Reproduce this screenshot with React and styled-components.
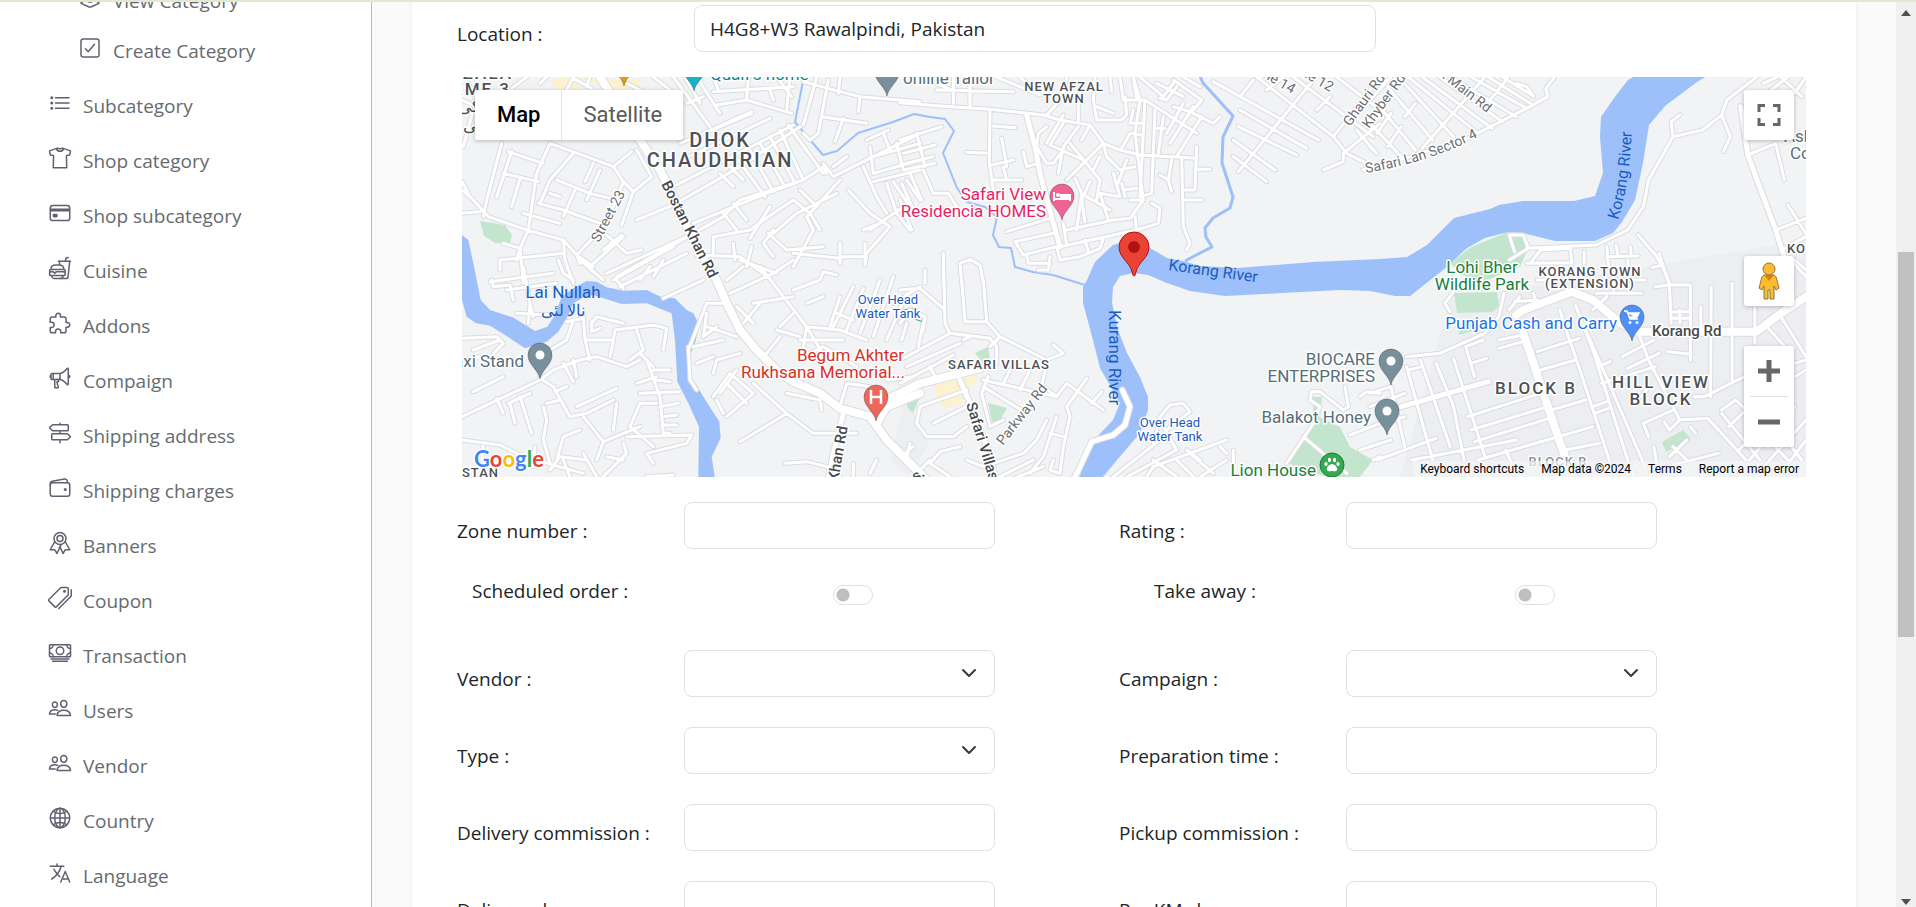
import React from "react";
import styled, { createGlobalStyle } from "styled-components";
import {
  IoLayersOutline,
  IoCheckboxOutline,
  IoListOutline,
  IoShirtOutline,
  IoCardOutline,
  IoFastFoodOutline,
  IoExtensionPuzzleOutline,
  IoMegaphoneOutline,
  IoTrailSignOutline,
  IoWalletOutline,
  IoRibbonOutline,
  IoPricetagsOutline,
  IoCashOutline,
  IoPeopleOutline,
  IoGlobeOutline,
  IoLanguageOutline,
} from "react-icons/io5";

const GlobalStyle = createGlobalStyle`
  *, *::before, *::after { box-sizing: border-box; }
  body {
    margin: 0;
    background: #fafafa;
    color: #212529;
    font-family: "Open Sans", "Noto Sans", sans-serif;
    font-size: 19px;
    line-height: 30px;
  }
`;

const Shell = styled.div`
  display: flex;
  height: 100vh;
  overflow: hidden;
  border-top: 2px solid #e3e8d0;
`;

/* ---------- sidebar ---------- */

const Sidebar = styled.nav`
  flex: 0 0 372px;
  overflow: hidden;
  background: #fff;
  border-right: 1px solid #bcbcbc;
`;

const Menu = styled.ul`
  list-style: none;
  margin: 0;
  padding: 0;
`;

const SubMenu = styled(Menu)`
  margin: -26px 0 2px;
`;

const MenuLink = styled.a`
  display: flex;
  align-items: center;
  gap: 11px;
  height: ${(p) => (p.$nested ? 50 : 55)}px;
  padding-left: ${(p) => (p.$nested ? 78 : 48)}px;
  color: #666b70;
  text-decoration: none;

  svg {
    flex: none;
    margin-bottom: 6px;
    color: #625f70;
  }
`;

const categoryMenu = [
  { label: "View Category", icon: IoLayersOutline },
  { label: "Create Category", icon: IoCheckboxOutline },
];

const menu = [
  { label: "Subcategory", icon: IoListOutline },
  { label: "Shop category", icon: IoShirtOutline },
  { label: "Shop subcategory", icon: IoCardOutline },
  { label: "Cuisine", icon: IoFastFoodOutline },
  { label: "Addons", icon: IoExtensionPuzzleOutline },
  { label: "Compaign", icon: IoMegaphoneOutline },
  { label: "Shipping address", icon: IoTrailSignOutline },
  { label: "Shipping charges", icon: IoWalletOutline },
  { label: "Banners", icon: IoRibbonOutline },
  { label: "Coupon", icon: IoPricetagsOutline },
  { label: "Transaction", icon: IoCashOutline },
  { label: "Users", icon: IoPeopleOutline },
  { label: "Vendor", icon: IoPeopleOutline },
  { label: "Country", icon: IoGlobeOutline },
  { label: "Language", icon: IoLanguageOutline },
];

function MenuItem({ label, icon: Icon, nested }) {
  return (
    <li>
      <MenuLink href="#" $nested={nested}>
        <Icon size={24} />
        {label}
      </MenuLink>
    </li>
  );
}

/* ---------- form ---------- */

const Main = styled.main`
  flex: 1;
  min-width: 0;
  padding: 0 40px;
`;

const Card = styled.form`
  padding-top: 3px;
  min-height: 100%;
  background: #fff;
  box-shadow: 0 0 6px rgba(0, 0, 0, 0.06);
`;

const LocationRow = styled.div`
  display: flex;
  padding-left: 45px;
`;

const Label = styled.label`
  flex: 0 0 ${(p) => p.$width || 227}px;
  padding-top: 14px;
`;

const TextInput = styled.input`
  display: block;
  width: 100%;
  height: 47px;
  padding: 0 15px;
  border: 1px solid #dee0e6;
  border-radius: 8px;
  background: #fff;
  color: #212529;
  font: inherit;
`;

const LocationInput = styled(TextInput)`
  width: 682px;
`;

const Fields = styled.div`
  display: grid;
  grid-template-columns: 1fr 1fr;
  row-gap: 30px;
  padding: 0 75px 0 45px;
`;

const Field = styled.div`
  display: flex;
  padding-right: 124px;
`;

const Control = styled.div`
  position: relative;
  flex: 1;
  min-width: 0;
`;

const Select = styled(TextInput).attrs({ as: "select" })`
  appearance: none;
`;

const Chevron = styled.svg`
  position: absolute;
  top: 15px;
  right: 18px;
  pointer-events: none;
`;

const Switches = styled.div`
  display: grid;
  grid-template-columns: 1fr 1fr;
  padding: 27px 20px 44px 60px;
`;

const SwitchField = styled.div`
  display: flex;
  align-items: center;
`;

const SwitchLabel = styled.label`
  flex: 0 0 361px;
`;

const Switch = styled.input`
  appearance: none;
  width: 40px;
  height: 20px;
  margin: 8px 0 0;
  border: 1px solid #dedfe3;
  border-radius: 10px;
  background: radial-gradient(circle at 9px 9px, #bfbfbf 6px, transparent 7px) #fff;
`;

/* ---------- map ---------- */

const MapFrame = styled.section`
  position: relative;
  height: 400px;
  margin: 25px 50px;
  overflow: hidden;
  background: #f1f3f4;
  font-family: Roboto, sans-serif;
`;

const MapCanvas = styled.svg`
  display: block;
  width: 100%;
  height: 100%;
`;

const shadow = "0 1px 4px rgba(0, 0, 0, 0.25)";

const TypeSwitch = styled.div`
  position: absolute;
  top: 13px;
  left: 13px;
  display: flex;
  height: 50px;
  border-radius: 3px;
  background: #fff;
  box-shadow: ${shadow};
`;

const TypeButton = styled.button`
  padding: 0 21px 2px;
  border: 0;
  border-left: 1px solid ${(p) => (p.$active ? "transparent" : "#e4e4e4")};
  background: none;
  color: ${(p) => (p.$active ? "#000" : "#5a5a5a")};
  font: ${(p) => (p.$active ? 500 : 400)} 22px Roboto, sans-serif;
`;

const MapControls = styled.div`
  position: absolute;
  top: 13px;
  right: 12px;
  display: flex;
  flex-direction: column;
  width: 50px;
`;

const MapButton = styled.button`
  display: grid;
  place-items: center;
  width: 50px;
  height: 50px;
  padding: 0;
  border: 0;
  border-radius: 3px;
  background: #fff;
  box-shadow: ${shadow};
`;

const PegmanButton = styled(MapButton)`
  margin: 116px 0 40px;
`;

const ZoomGroup = styled.div`
  border-radius: 3px;
  background: #fff;
  box-shadow: ${shadow};

  hr {
    margin: 0 6px;
    border: 0;
    border-top: 1px solid #e0e0e0;
  }

  button {
    box-shadow: none;
  }
`;

const Attribution = styled.div`
  position: absolute;
  right: 0;
  bottom: 0;
  display: flex;
  align-items: center;
  gap: 17px;
  height: 16px;
  padding: 0 7px;
  background: rgba(245, 245, 245, 0.7);
  color: #000;
  font-size: 12px;
  line-height: 16px;

  a, button {
    padding: 0;
    border: 0;
    background: none;
    color: inherit;
    font: inherit;
    text-decoration: none;
  }
`;

/* Road geometry, one sheet per map tile; each sheet has its own origin and scale. */
const sheets = [
  {
    at: "translate(440 0) scale(.33333)",
    minor: `M66,570L100,600 145,650 260,690 370,720 410,765 420,790M66,640L120,635M66,545L90,590M185,430L140,600 130,650M215,455L170,590
      M330,430L290,520 265,690 240,745 250,850M205,455L310,490M190,520L295,545M240,535L215,620M250,640L360,670M330,430L440,470 520,500 575,455
      M400,460L330,540 300,610M460,490L435,545M350,540L450,580 530,600M295,610L370,630 480,670M405,570L370,650M520,500L550,545 500,670 410,765
      M550,545L580,575 545,675M580,575L635,530 590,450M480,510L440,600M330,580L360,590M190,730L240,745 230,780M370,720L375,780 400,850
      M180,810L180,780 370,760M500,705L560,760 605,750M545,705L490,750M410,765L460,800M450,800L550,710
      M590,660L700,615 900,500 1080,380M700,560L1060,375M760,670L980,580 1090,540 1150,500M530,830L850,650M500,820L740,710M725,480L990,355M720,430L935,340
      M870,500L910,540M895,480L975,590M930,450L1000,575M960,430L1035,560M990,410L1060,540M1020,390L1090,540M1045,375L1150,520M840,520L880,560
      M1150,490L1180,530 1300,470 1440,430M1180,500L1220,470M1150,500L1160,520M1090,400L1110,420 1135,400 1165,240M1130,231L1090,375
      M1145,350L1280,370M1210,355L1185,425M1090,245L1200,275 1260,290 1440,305M1260,290L1255,335M1200,231L1195,280
      M820,275L1060,260M830,315L920,300 1055,340M925,231L920,300M1050,231L1040,330M1010,231L1055,290M990,270L1000,300
      M700,231L810,380M735,231L780,310M770,231L840,340M740,310L790,290M790,400L935,335M820,231L835,270M380,270L400,231M400,235L455,265M450,231L440,260
      M300,250L320,231M560,250L640,290M215,265L260,231M140,265L150,231M90,231L110,270M640,231L690,270
      M850,650L900,600 1090,540M880,610L920,660M850,640L890,690M1190,580L1070,640 1000,700M1225,570L1290,640 1350,680 1280,760 1275,795
      M1000,640L1060,600 1110,640 1140,690M930,715L990,620M985,700L1040,750 1150,740M1200,540L1100,650 1120,690 1060,800M1270,690L1320,670
      M820,765L820,710 930,690 1000,640M880,730L885,780M935,740L920,800M770,765L900,770 990,835M1060,760L1200,775 1200,790M1200,770L1280,770
      M1000,690L970,730 1000,770M1080,570L1130,620M1290,690L1390,620
      M1260,490L1440,400M1270,500L1310,590 1340,640M1290,440L1300,520 1440,480M1280,420L1345,390M1330,400L1350,450M1370,430L1390,510M1300,545L1440,510
      M1340,550L1370,640 1410,690M1360,545L1410,620M1400,540L1440,600M66,300L150,340M100,330L70,440`,
  },
  {
    at: "translate(900 0) scale(.33333)",
    minor: `M0,308L120,318 270,328 430,345 480,360 570,375 610,430 660,450 720,465 890,475M270,328L268,490 280,570M280,378L345,383M200,457L268,460
      M305,415L320,500M275,495L340,480M280,540L365,540M310,500L320,540M370,455L380,500 415,490M440,345L490,290 500,231M440,380L415,400 410,440 440,490 460,490 490,450
      M440,430L490,345M490,370L450,435 550,480M535,380L490,440 475,520M535,360L535,300M590,360L580,300 585,231M570,375L545,420M610,430L500,540
      M510,430L600,540 590,600M610,430L620,470 660,510 705,500M590,320L640,340M590,360L665,360 680,345 675,290M690,400L665,445M690,370L700,330M690,370L725,370M690,400L725,405
      M700,231L710,300M680,300L735,300M630,231L635,275M660,231L670,300M735,300L720,590 755,580 765,330M735,300L890,400M790,350L775,460M770,385L795,385
      M720,231L790,290 820,250M770,250L850,290M780,295L800,300 830,260M820,240L905,300 880,330M850,231L900,260M820,320L870,335 940,370 960,350M850,310L800,400
      M880,320L810,430M905,350L830,470M845,475L850,680 870,730 860,750M890,440L885,570 855,570M885,508L930,508M850,600L905,600M815,480L805,540 815,575M780,525L805,540
      M700,231L720,300 705,400 730,600 690,655 640,660 500,690M690,600L730,600M705,650L710,690M755,610L780,625 775,670 710,690 480,740M640,520L660,590 600,580
      M665,550L675,590M600,580L625,660M560,590L630,630M570,545L545,600 555,665M525,535L545,580 530,690M680,480L650,560M670,570L710,565
      M600,470L580,510M320,695L450,655M345,725L460,700M345,725L370,765 470,740M380,765L385,790 450,790M450,770L445,810 415,810M470,740L480,780 540,770 600,745 610,715M555,720L565,755M490,670L500,735
      M0,420L125,380M10,460L105,435M0,495L100,470M10,510L105,490M50,400L75,500M30,520L65,600M70,510L100,580 145,580 170,620M0,600L35,690M5,550L45,640
      M160,231L160,310M210,240L210,320M110,270L340,275M110,250L155,270M290,231L420,285M360,231L390,260M130,780L130,850M75,810L75,850M185,850L180,790 210,778 240,795 250,850
      M940,245L1255,420M1020,330L1220,445M1015,380L1190,465M1000,420L1125,510M1000,470L1100,545M1070,231L1300,410 1340,460 1440,510
      M1015,515L1240,240M1020,290L1060,240M1250,330L1290,290M1440,231L1300,410M1440,370L1330,460 1330,485 1270,510M1310,231L1440,330M1180,231L1420,410M1370,390L1420,450M1100,270L1150,231`,
    mid: "M380,345L405,440 420,520 460,670 480,740",
  },
  {
    at: "translate(1370 0) scale(.3482 .33333)",
    minor: `M-20,510L100,475 280,415 450,325 510,290 505,265 530,231M0,370L90,470M0,440L20,460M20,310L130,450M50,260L180,420M85,235L240,410M110,231L310,400M150,231L350,385M200,231L380,365
      M230,231L420,350M290,231L450,325M340,231L460,310M380,231L465,285M150,445L330,231M90,380L50,440M130,310L100,350M345,300L395,235M0,300L60,231M60,340L20,400M420,250L450,260 470,290
      M1110,231L1025,300 1010,345 955,390 870,410 800,540 785,620 740,690 650,735 450,745M870,410L865,365 890,345M1010,345L1035,410 1015,455
      M1085,465L1165,430 1190,540M1165,690L1252,655M1200,615L1252,700M1190,745L1252,710M1200,770L1252,830M1130,250L1170,231M1180,231L1240,290M1252,231L1220,280M1140,280L1200,231
      M400,705L440,705 455,745 400,780M400,705L415,755M770,705L820,765 840,800 860,850M460,790L490,750 575,745 580,790M680,740L685,800M680,770L770,768M707,735L712,768M748,740L750,768
      M615,755L615,790M450,790L580,788M810,803L840,795`,
    mid: "M1065,320L1085,465 1165,690 1195,790",
  },
  {
    at: "translate(440 260) scale(.33333)",
    minor: `M66,235L170,230 190,250 160,280M100,270L180,240M66,300L120,290M66,470L300,360 340,330 420,300 470,290 560,320 600,300M100,395L190,350M170,415L190,460M205,430L270,400M210,430L225,490
      M240,410L275,520M300,355L340,380 390,470 440,460 520,420M310,440L320,480 310,540 330,610M410,440L530,385M345,395L380,380M320,430L360,420M430,470L490,545 470,600M490,545L600,500M350,600L370,530 420,510M530,430L520,510
      M600,430L570,500 640,560M600,430L650,430M66,540L180,555 250,590 430,640M130,550L125,600M285,560L280,620M330,630L360,590 440,600M370,600L390,651M430,580L470,650M490,650L560,580 550,550
      M500,590L550,600M620,300L660,410 670,520 690,520M600,280L640,320M640,330L690,330M650,360L690,365M590,370L650,350M600,400L720,395M660,440L715,430M665,470L710,465M665,495L710,495
      M560,530L755,525 740,550 620,580 640,610M620,650L700,645M455,185L455,215 480,205M455,190L470,170 510,180 550,190M430,170L435,240 520,240 525,210 640,195 680,205 670,270M435,240L450,300M520,240L510,290
      M590,210L610,270 570,300M380,185L430,175M330,270L380,240 400,180M400,300L410,350M370,310L400,365M270,130L280,170M230,160L330,165M250,20L270,130 265,190M150,65L340,40M155,60L160,80 210,75M210,75L220,120M200,90L350,70
      M355,0L370,40 400,60M490,60L420,0M520,60L700,-40M540,80L740,-20M530,60L550,85M670,115L790,60M600,60L630,20M640,50L670,0M745,260L750,360 770,390M745,270L800,130 860,130M800,160L790,230 830,200
      M760,260L850,240M800,200L890,230M770,310L820,290M820,410L870,340 940,400 860,470M830,420L850,460M860,370L920,430M820,340L830,300 900,280M890,330L840,400
      M900,545L1000,485 1040,460 940,370M1040,460L1120,520 1250,520M1040,400L1140,420 1145,450M1035,610L1100,605 1160,620 1200,651M1240,610L1240,651M1310,600L1290,640M1410,550L1400,600
      M860,60L910,20M870,100L1000,40M910,190L960,130M890,140L940,190M960,20L1100,200 1160,300M1000,40L1060,0M900,0L1010,40M940,130L1060,110M1010,210L1080,230M1020,230L980,280
      M1100,200L1200,210 1280,240M1080,240L1210,240M1100,200L1090,260M1100,130L1150,110M1060,90L1140,60 1150,35 1190,45M1180,200L1240,80M1220,210L1270,85M1260,220L1320,60M1300,230L1360,50M1340,240L1400,100M1170,200L1200,110
      M1190,160L1240,180M1360,130L1440,80M1200,440L1220,370 1290,380M1340,360L1420,350M1110,280L1150,260 1250,320M1060,160L1020,200M1200,-50L1200,10M1275,-50L1275,10`,
    mid: "M1210,460L1180,580 1165,660",
    major: "M480,-549L600,-360 660,-270 700,-190 760,-60 800,10 830,60 860,130 900,210 950,270 1010,330 1060,365 1140,400 1200,445 1290,470 1340,540 1460,660M1310,490L1340,440 1440,400",
  },
  {
    at: "translate(900 260) scale(.33333)",
    minor: `M130,-20L135,190 150,220 270,235 290,260 290,310M0,90L60,85 130,145M150,220L0,300M185,60L195,185 260,185 250,60M260,185L300,230 440,300 490,280 460,255M300,230L270,260M190,240L210,230
      M0,370L160,285M20,320L180,250M90,320L110,360M70,190L55,260M20,190L5,240M0,190L30,150 75,170 70,210M250,360L470,410 500,370 610,450M250,380L380,460M265,350L245,400 270,500 310,480
      M330,330L310,370M390,330L360,390M440,310L420,400M560,355L500,440M605,395L575,430M470,410L430,380M530,400L500,440 510,470 490,560 480,640M470,470L430,590 390,640M450,520L490,530M460,600L450,630 480,640
      M200,600L250,620 370,580 410,540 440,480M300,650L400,600M330,660L430,620M180,560L120,575 90,610 150,650M90,600L50,640M100,490L200,440M60,440L50,490 80,530 160,530 200,500M60,440L200,390M0,590L40,560
      M760,550L780,470 810,435 850,430 870,455 800,510M790,500L830,570M640,650L780,540M680,651L830,570M740,651L760,620 980,540M760,600L830,650M830,600L880,650M870,580L940,640M860,570L900,600M1000,570L1000,610M960,560L980,580M900,651L980,600
      M1160,610L1240,490 1260,440 1230,420 1235,395 1260,395 1330,450 1345,440 1335,380M1210,530L1340,640M1380,410L1400,395 1440,400M1350,525L1440,490M1380,570L1440,550M1420,600L1440,590`,
    mid: "M180,360L210,430 260,560 290,660M667,390L690,440 675,495 640,525 575,545 540,620 520,660",
    major: "M-70,430L0,400 60,370 160,345 240,325M-20,560L80,660",
  },
  {
    at: "translate(1370 260) scale(.3482 .33333)",
    minor: `M1105,215L1105,140M1105,220L1105,250M480,275L600,235M490,330L590,300M370,265L440,245M370,240L440,225M280,470L490,400M290,510L510,440M300,545L530,470M310,600L640,500M560,570L660,550M520,450L620,420
      M640,440L680,425M645,460L685,445M655,320L690,305M665,370L820,320M275,260L300,350M275,260L325,240M290,310L335,295M240,295L330,590M190,310L240,440 270,600M145,300L230,560M105,320L180,600M60,380L100,560
      M0,400L60,380M0,440L100,400M110,330L150,320M20,600L190,535M0,560L60,540M120,600L420,540M390,570L410,620M100,470L70,480M415,125L480,120M470,100L475,130M400,150L430,110M105,290L200,280 330,220 370,170 385,100M230,155L215,130 240,95
      M830,-20L860,75 920,75 920,300M860,75L865,190M865,155L915,155M865,175L915,175M890,150L890,190M820,80L860,75M950,140L950,210M980,80L978,410M1040,70L1040,370M855,275L915,282M770,215L800,300 890,480 970,475 1080,600
      M725,290L815,240M740,325L830,280M780,410L800,380M930,410L960,410 1075,350M890,480L860,510 845,485M800,530L785,490 870,450M815,560L830,651M870,560L910,600M850,620L1000,580M860,590L910,540M920,500L935,520
      M1010,450L1050,420 1110,480M1010,460L1120,600M1030,500L1080,450M1180,170L1252,290M1140,200L1200,270M1220,0L1252,30M1060,570L1200,400M1090,600L1220,440M1130,620L1252,480M1180,640L1252,540M1100,490L1200,600M1130,450L1240,600
      M1220,310L1252,300M1220,350L1252,330M545,150L560,200 600,320 690,610M590,135L640,270 740,600 760,651M620,210L790,620M640,150L680,110M700,40L700,90M650,100L780,100M690,60L790,60M740,0L745,60M480,60L600,60`,
    mid: "M90,440L340,365",
    major: "M420,165L440,150 580,95 640,120 720,190 770,215 1110,215 1180,160 1260,105M440,220L460,280 530,500 560,590",
  },
];

function Roads() {
  const pass = (kind, width, colour) =>
    sheets.map((s) =>
      s[kind] ? (
        <g key={s.at + width} transform={s.at}>
          <path d={s[kind]} stroke={colour} strokeWidth={width} vectorEffect="non-scaling-stroke" />
        </g>
      ) : null
    );
  return (
    <g fill="none" strokeLinecap="round" strokeLinejoin="round">
      {pass("minor", 5, "#dadce0")}
      {pass("mid", 7, "#dadce0")}
      {pass("major", 10, "#dadce0")}
      {pass("minor", 3, "#fff")}
      {pass("mid", 5, "#fff")}
      {pass("major", 8, "#fff")}
    </g>
  );
}

const Tag = styled.text`
  font-family: Roboto, sans-serif;
  font-size: ${(p) => p.$size || 17}px;
  font-weight: ${(p) => p.$weight || 400};
  letter-spacing: ${(p) => p.$track || 0}px;
  fill: ${(p) => p.$tone || "#546e7a"};
  text-anchor: ${(p) => p.$anchor || "start"};
  stroke: ${(p) => (p.$plain ? "none" : "#fff")};
  stroke-width: 3px;
  stroke-linejoin: round;
  paint-order: stroke;
`;

const water = "#1a5cc0";
const area = { $weight: 500, $tone: "#4d5156", $anchor: "middle" };
const street = { $size: 14, $tone: "#6b6e73" };
const road = { $size: 15, $weight: 500, $tone: "#45484c" };

const tags = [
  { x: 513, y: 79, text: "GHAZALA", $size: 17, ...area, $anchor: "end", $track: 2 },
  { x: 511, y: 95, text: "SCHEME 3", $size: 17, ...area, $anchor: "end", $track: 2 },
  { x: 476, y: 112, text: "سکی", $size: 17, ...area, $anchor: "middle" },
  { x: 474, y: 131, text: "کی", $size: 17, ...area, $anchor: "middle" },
  { x: 720, y: 147, text: "DHOK", $size: 20, ...area, $track: 2 },
  { x: 720, y: 167, text: "CHAUDHRIAN", $size: 20, ...area, $track: 2 },
  { x: 1064, y: 91, text: "NEW AFZAL", $size: 13, ...area, $track: 1 },
  { x: 1064, y: 103, text: "TOWN", $size: 13, ...area, $track: 1 },
  { x: 710, y: 80, text: "Quaif's home", $tone: "#0b8793" },
  { x: 903, y: 84, text: "online Tailor" },
  { x: 1046, y: 200, text: "Safari View", $anchor: "end", $tone: "#e91e63" },
  { x: 1046, y: 217, text: "Residencia HOMES", $anchor: "end", $tone: "#e91e63" },
  { x: 563, y: 298, text: "Lai Nullah", $anchor: "middle", $tone: water, $plain: true },
  { x: 563, y: 316, text: "نالا لئی", $size: 16, $anchor: "middle", $tone: water, $plain: true },
  { x: 888, y: 304, text: "Over Head", $size: 13, $anchor: "middle", $tone: water },
  { x: 888, y: 318, text: "Water Tank", $size: 13, $anchor: "middle", $tone: water },
  { x: 1170, y: 427, text: "Over Head", $size: 13, $anchor: "middle", $tone: water },
  { x: 1170, y: 441, text: "Water Tank", $size: 13, $anchor: "middle", $tone: water },
  { x: 904, y: 361, text: "Begum Akhter", $anchor: "end", $tone: "#d93025" },
  { x: 905, y: 378, text: "Rukhsana Memorial...", $anchor: "end", $tone: "#d93025" },
  { x: 524, y: 367, text: "Taxi Stand", $anchor: "end" },
  { x: 999, y: 369, text: "SAFARI VILLAS", $size: 13, ...area, $track: 1 },
  { x: 1375, y: 365, text: "BIOCARE", $anchor: "end" },
  { x: 1375, y: 382, text: "ENTERPRISES", $anchor: "end" },
  { x: 1371, y: 423, text: "Balakot Honey", $anchor: "end" },
  { x: 1316, y: 476, text: "Lion House", $anchor: "end", $tone: "#188038" },
  { x: 1482, y: 273, text: "Lohi Bher", $anchor: "middle", $tone: "#188038" },
  { x: 1482, y: 290, text: "Wildlife Park", $anchor: "middle", $tone: "#188038" },
  { x: 1590, y: 276, text: "KORANG TOWN", $size: 13, ...area, $track: 1 },
  { x: 1590, y: 288, text: "(EXTENSION)", $size: 13, ...area, $track: 1 },
  { x: 1617, y: 329, text: "Punjab Cash and Carry", $anchor: "end", $tone: "#1a73e8" },
  { x: 1652, y: 336, text: "Korang Rd", ...road },
  { x: 1536, y: 394, text: "BLOCK B", $size: 17, ...area, $track: 2 },
  { x: 1661, y: 388, text: "HILL VIEW", $size: 17, ...area, $track: 2 },
  { x: 1661, y: 405, text: "BLOCK", $size: 17, ...area, $track: 2 },
  { x: 1558, y: 466, text: "BLOCK B", $size: 13, ...area, $tone: "#8c8f93", $track: 1 },
  { x: 1787, y: 253, text: "KORANG", $size: 13, ...area, $anchor: "start", $track: 1 },
  { x: 1784, y: 142, text: "Ashal" },
  { x: 1790, y: 159, text: "College" },
  { x: 462, y: 477, text: "STAN", $size: 13, ...area, $anchor: "start", $track: 1 },
  { x: 1168, y: 270, turn: 8, text: "Korang River", $size: 16, $tone: water, $plain: true },
  { x: 1109, y: 310, turn: 90, text: "Kurang River", $size: 17, $tone: water, $plain: true },
  { x: 599, y: 243, turn: -62, text: "Street 23", ...street },
  { x: 661, y: 184, turn: 63, text: "Bostan Khan Rd", ...road },
  { x: 966, y: 404, turn: 73, text: "Safari Villas", ...road },
  { x: 838, y: 482, turn: -80, text: "Khan Rd", ...road },
  { x: 1003, y: 446, turn: -52, text: "Parkway Rd", ...street },
  { x: 1350, y: 127, turn: -54, text: "Ghauri Rd", ...street },
  { x: 1369, y: 129, turn: -54, text: "Khyber Rd", ...street },
  { x: 1292, y: 94, turn: 30, text: "Lane 14", ...street, $anchor: "end" },
  { x: 1330, y: 92, turn: 30, text: "Lane 12", ...street, $anchor: "end" },
  { x: 1487, y: 113, turn: 38, text: "Block Main Rd", ...street, $anchor: "end" },
  { x: 916, y: 482, turn: -35, text: "s.", ...road },
];

function Pin({ x, y, fill, children }) {
  return (
    <g transform={`translate(${x} ${y})`}>
      <path
        d="M0,24C-2,14 -12,10 -12,0A12,12 0 0 1 12,0C12,10 2,14 0,24Z"
        fill={fill}
        stroke="rgba(40,50,60,.35)"
        strokeWidth="1"
      />
      {children || <circle r="4.5" fill="#fff" />}
    </g>
  );
}

function StreetMap() {
  return (
    <MapCanvas viewBox="462 77 1344 400" preserveAspectRatio="xMidYMid slice" role="img" aria-label="Street map">
      <defs>
        <path id="safari-lan" d="M1366,173Q1420,164 1466,143L1500,126" />
        <path id="korang-north" d="M1618,220Q1631,180 1632,120" />
      </defs>
      <rect x="0" y="0" width="2600" height="900" fill="#f1f3f4" />
      <path d="M1450,300L1806,240V477H1400ZM905,400L930,440 910,477 890,460Z" fill="#e8eaed" opacity=".5" />

      <g fill="#c3e5cd">
        <path d="M480,221L505,225 512,235 510,244 495,243 484,236Z" />
        <path d="M1450,263L1471,247 1508,232 1523,233 1529,247 1520,267 1475,285Z" />
        <path d="M1454,293L1497,292 1499,307 1492,312 1457,313ZM1460,322L1480,318 1476,330 1459,335Z" />
        <path d="M1662,442L1683,430 1691,439 1666,452Z" />
        <path d="M1313,397L1322,397 1320,417 1340,427 1350,447 1373,460 1360,477H1327L1287,463 1303,437 1313,420Z" />
        <path d="M907,390L920,385 920,397 913,413 907,407ZM988,403L1007,408 1000,420 992,422Z" />
        <path d="M975,353L988,347 990,358 982,362Z" />
        <path d="M903,310L915,308 924,316 923,322 912,318Z" stroke="#34a853" />
      </g>
      <path d="M550,80L563,77H587L577,90H557ZM587,80L640,79V88L607,90Z" fill="#fdf2d0" />
      <path d="M935,377L977,374 975,383 960,392 963,403 943,409 935,393Z" fill="#fdf2d0" />

      <g fill="#9dc0fb">
        <g transform="translate(440 260) scale(.33333)">
          <path d="M66,-75L85,-60 100,10 122,120 150,150 218,172 285,213 322,200 345,165 365,110 400,85 440,63 470,65 500,82 550,92 620,90 665,112 705,115 740,150 760,160 775,190 768,240 745,300 745,350 770,375 790,410 838,485 842,535 815,590 825,655 775,655 777,500 745,430 712,365 705,240 695,160 620,130 545,132 500,118 460,105 430,112 400,130 385,165 355,215 320,245 255,265 195,225 150,197 108,190 80,170 66,120Z" />
        </g>
        <path d="M1079,478L1092,442 1097,437 1113,420 1120,403 1108,382 1100,368 1093,340 1083,303V287L1087,280 1095,262 1113,245 1133,238 1150,248 1167,258 1183,261 1200,266 1237,268 1313,262 1380,259 1407,257 1427,245 1454,218 1490,209 1499,205 1523,201H1574L1595,196 1603,173 1600,137 1601,117 1614,98 1628,80 1635,76H1707L1697,82 1665,106 1649,125 1643,163 1635,200 1622,222 1613,233 1595,241H1555L1523,233 1508,232 1485,238 1467,248 1443,270 1410,296 1395,296 1370,291 1340,290 1283,293 1225,296 1190,291 1167,283 1148,275 1133,273 1120,276 1113,287 1112,303 1118,330 1127,353 1140,377 1148,397V410L1140,433 1123,453 1102,478Z" />
      </g>
      <g fill="none" stroke="#9dc0fb" strokeLinejoin="round">
        <path d="M803,81L795,122 823,155 837,151 858,133 893,122 914,114 930,117 945,119 954,131 943,153 957,188 967,202 985,207 997,217 993,235 999,247 1011,248 1015,267 1033,272 1053,275 1085,285" strokeWidth="2" />
        <path d="M1200,76L1203,83 1233,116 1223,137 1222,163 1233,197 1230,208 1213,218 1205,228 1206,237 1212,247 1200,253 1185,261" strokeWidth="3" />
      </g>

      <Roads />

      {tags.map(({ x, y, turn, text, ...look }, i) => (
        <Tag key={i} x={x} y={y} transform={turn ? `rotate(${turn} ${x} ${y})` : undefined} {...look}>
          {text}
        </Tag>
      ))}
      <Tag {...street}>
        <textPath href="#safari-lan">Safari Lan Sector 4</textPath>
      </Tag>
      <Tag $size={16} $tone={water} $plain>
        <textPath href="#korang-north">Korang River</textPath>
      </Tag>

      <Pin x={624} y={62} fill="#f29900" />
      <Pin x={694} y={67} fill="#12b5cb" />
      <Pin x={887} y={72} fill="#78909c" />
      <Pin x={540} y={355} fill="#78909c" />
      <Pin x={1391} y={361} fill="#78909c" />
      <Pin x={1387} y={411} fill="#78909c" />
      <Pin x={1062} y={196} fill="#f06292">
        <path d="M-8,-4V5M-8,3H8M8,5V-1H-1V3" fill="none" stroke="#fff" strokeWidth="2" />
        <path d="M0,-2H7V2H0Z" fill="#fff" />
        <circle cx="-4" cy="-1" r="2" fill="#fff" />
      </Pin>
      <Pin x={876} y={397} fill="#ee675c">
        <path d="M-5,-7V7M5,-7V7M-5,0H5" stroke="#fff" strokeWidth="2.5" />
      </Pin>
      <Pin x={1632} y={317} fill="#4f8ff7">
        <path d="M-8,-6H-5L-2,2H6M-4,-4H7L5,0H-3" fill="#fff" stroke="#fff" strokeWidth="1.5" />
        <circle cx="-2" cy="5.500" r="1.500" fill="#fff" />
        <circle cx="5" cy="5.500" r="1.500" fill="#fff" />
      </Pin>
      <g transform="translate(1332 465)">
        <circle r="12" fill="#34a853" stroke="#1e7e38" />
        <path d="M0,-1C3,-1 6,3 5,5C4,7 2,6 0,6S-4,7 -5,5C-6,3 -3,-1 0,-1Z" fill="#fff" />
        <g fill="#fff">
          <ellipse cx="-6" cy="-1" rx="1.600" ry="2" />
          <ellipse cx="-2.500" cy="-5" rx="1.600" ry="2.200" />
          <ellipse cx="2.500" cy="-5" rx="1.600" ry="2.200" />
          <ellipse cx="6" cy="-1" rx="1.600" ry="2" />
        </g>
      </g>

      <g transform="translate(1134 247)">
        <path
          d="M0,29C-1,29 -1,28 -2,25C-4,15 -15,11 -15,0A15,15 0 0 1 15,0C15,11 4,15 2,25C1,28 1,29 0,29Z"
          fill="#ea4335"
          stroke="#b31412"
        />
        <circle r="6" fill="#b31412" />
      </g>

      <text
        x="474"
        y="467"
        fontFamily="Lato, sans-serif"
        fontSize="22"
        fontWeight="700"
        stroke="#fff"
        strokeWidth="3"
        paintOrder="stroke"
      >
        <tspan fill="#4285f4">G</tspan>
        <tspan fill="#ea4335">o</tspan>
        <tspan fill="#fbbc04">o</tspan>
        <tspan fill="#4285f4">g</tspan>
        <tspan fill="#34a853">l</tspan>
        <tspan fill="#ea4335">e</tspan>
      </text>
    </MapCanvas>
  );
}

/* ---------- scrollbar ---------- */

const Scrollbar = styled.div`
  display: flex;
  flex: 0 0 20px;
  flex-direction: column;
  align-items: center;
  justify-content: space-between;
  padding: 8px 0 2px;
  background: #f0f0f0;
`;

const ScrollTrack = styled.div`
  flex: 1;
  width: 16px;
  margin: 4px 0;
  padding-top: 232px;
`;

const ScrollThumb = styled.div`
  height: 385px;
  background: #c1c1c1;
`;

function TextField({ id, label, select }) {
  return (
    <Field>
      <Label htmlFor={id}>{label} :</Label>
      <Control>
        {select ? (
          <>
            <Select id={id} defaultValue="" />
            <Chevron width="16" height="16" viewBox="0 0 16 16" fill="none" stroke="#343a40" strokeWidth="2" strokeLinecap="round" strokeLinejoin="round">
              <path d="M2,5L8,11L14,5" />
            </Chevron>
          </>
        ) : (
          <TextInput id={id} type="text" />
        )}
      </Control>
    </Field>
  );
}

export default function App() {
  return (
    <>
      <GlobalStyle />
      <Shell>
        <Sidebar>
          <SubMenu>
            {categoryMenu.map((item) => (
              <MenuItem key={item.label} {...item} nested />
            ))}
          </SubMenu>
          <Menu>
            {menu.map((item) => (
              <MenuItem key={item.label} {...item} />
            ))}
          </Menu>
        </Sidebar>

        <Main>
          <Card>
            <LocationRow>
              <Label htmlFor="location" $width={237}>
                Location :
              </Label>
              <LocationInput id="location" type="text" defaultValue="H4G8+W3 Rawalpindi, Pakistan" />
            </LocationRow>

            <MapFrame>
              <StreetMap />
              <TypeSwitch>
                <TypeButton type="button" $active>
                  Map
                </TypeButton>
                <TypeButton type="button">Satellite</TypeButton>
              </TypeSwitch>
              <MapControls>
                <MapButton type="button" aria-label="Toggle fullscreen view">
                  <svg width="24" height="24" viewBox="0 0 24 24" fill="none" stroke="#666" strokeWidth="3">
                    <path d="M2,9V2.500H8M16,2.500H22V9M22,15V21.500H16M8,21.500H2V15" />
                  </svg>
                </MapButton>
                <PegmanButton type="button" aria-label="Street View">
                  <svg width="22" height="38" viewBox="1 0 22 38" stroke="#8c7440" strokeWidth="1">
                    <path d="M7,13H17C20,14 20,20 22,26L19,28 17,24V37H13V28H11V37H7V24L5,28 2,26C4,20 4,14 7,13Z" fill="#fbbc2c" />
                    <path d="M7,13H17L12,19Z" fill="#e37b1c" stroke="none" />
                    <circle cx="12" cy="7" r="6" fill="#fbbc2c" />
                  </svg>
                </PegmanButton>
                <ZoomGroup>
                  <MapButton type="button" aria-label="Zoom in">
                    <svg width="22" height="22" viewBox="0 0 22 22" fill="none" stroke="#666" strokeWidth="5">
                      <path d="M0,11H22M11,0V22" />
                    </svg>
                  </MapButton>
                  <hr />
                  <MapButton type="button" aria-label="Zoom out">
                    <svg width="22" height="22" viewBox="0 0 22 22" fill="none" stroke="#666" strokeWidth="5">
                      <path d="M0,11H22" />
                    </svg>
                  </MapButton>
                </ZoomGroup>
              </MapControls>
              <Attribution>
                <button type="button">Keyboard shortcuts</button>
                <span>Map data ©2024</span>
                <a href="#">Terms</a>
                <a href="#">Report a map error</a>
              </Attribution>
            </MapFrame>

            <Fields>
              <TextField id="zone" label="Zone number" />
              <TextField id="rating" label="Rating" />
            </Fields>

            <Switches>
              <SwitchField>
                <SwitchLabel htmlFor="scheduled">Scheduled order :</SwitchLabel>
                <Switch id="scheduled" type="checkbox" role="switch" />
              </SwitchField>
              <SwitchField>
                <SwitchLabel htmlFor="takeaway">Take away :</SwitchLabel>
                <Switch id="takeaway" type="checkbox" role="switch" />
              </SwitchField>
            </Switches>

            <Fields>
              <TextField id="vendor" label="Vendor" select />
              <TextField id="campaign" label="Campaign" select />
              <TextField id="type" label="Type" select />
              <TextField id="prep" label="Preparation time" />
              <TextField id="delivery-commission" label="Delivery commission" />
              <TextField id="pickup-commission" label="Pickup commission" />
              <TextField id="delivery-charges" label="Delivery charges" />
              <TextField id="km-charges" label="Per KM charges" />
            </Fields>
          </Card>
        </Main>

        <Scrollbar aria-hidden="true">
          <svg width="10" height="6" viewBox="0 0 10 6">
            <path d="M5,0L10,6H0Z" fill="#505050" />
          </svg>
          <ScrollTrack>
            <ScrollThumb />
          </ScrollTrack>
          <svg width="10" height="6" viewBox="0 0 10 6">
            <path d="M0,0H10L5,6Z" fill="#505050" />
          </svg>
        </Scrollbar>
      </Shell>
    </>
  );
}
